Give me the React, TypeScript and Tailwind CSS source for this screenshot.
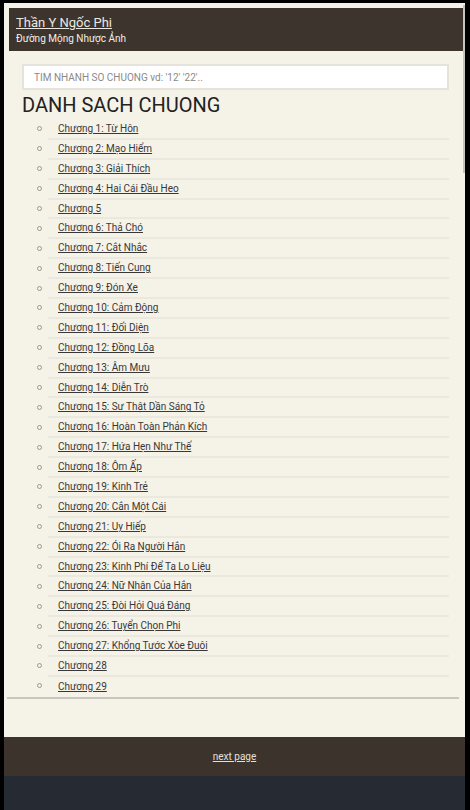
import React from 'react';

const chapters: string[] = [
  'Chương 1: Từ Hôn',
  'Chương 2: Mạo Hiểm',
  'Chương 3: Giải Thích',
  'Chương 4: Hai Cái Đầu Heo',
  'Chương 5',
  'Chương 6: Thả Chó',
  'Chương 7: Cắt Nhắc',
  'Chương 8: Tiến Cung',
  'Chương 9: Đón Xe',
  'Chương 10: Cảm Động',
  'Chương 11: Đối Diện',
  'Chương 12: Đồng Lõa',
  'Chương 13: Âm Mưu',
  'Chương 14: Diễn Trò',
  'Chương 15: Sự Thật Dần Sáng Tỏ',
  'Chương 16: Hoàn Toàn Phản Kích',
  'Chương 17: Hứa Hẹn Như Thế',
  'Chương 18: Ôm Ấp',
  'Chương 19: Kinh Trẻ',
  'Chương 20: Cắn Một Cái',
  'Chương 21: Uy Hiếp',
  'Chương 22: Ói Ra Người Hắn',
  'Chương 23: Kinh Phí Để Ta Lo Liệu',
  'Chương 24: Nữ Nhân Của Hắn',
  'Chương 25: Đòi Hỏi Quá Đáng',
  'Chương 26: Tuyển Chọn Phi',
  'Chương 27: Khổng Tước Xòe Đuôi',
  'Chương 28',
  'Chương 29',
];

const ChapterRow: React.FC<{ title: string; last: boolean }> = ({ title, last }) => (
  <li className="flex h-[19.9px] items-stretch">
    <span className="flex w-[18px] items-center justify-center pb-[2px]">
      <span className="h-[5px] w-[5px] rounded-full border border-[#9a978f]" />
    </span>
    <div
      className={`flex flex-1 items-center pl-[10px] ${last ? '' : 'border-b-2 border-[#ebe8df]'}`}
    >
      <a href="#" className="text-[10px] leading-none text-[#383838] underline">
        {title}
      </a>
    </div>
  </li>
);

const App: React.FC = () => {
  return (
    <div className="flex min-h-[810px] flex-col bg-black pl-1 pr-[5px] pt-[3px] font-['Roboto',sans-serif]">
      <div className="relative flex h-[734px] flex-col bg-[#f5f2e8] pl-[5px] pr-[2px] pt-[5px]">
        <div className="absolute right-0 top-[2px] h-[168px] w-[2px] bg-[#c7c4bb]" />
        <header className="flex h-[43px] flex-col justify-center bg-[#3c342d] pl-[7px] pr-2">
          <a href="#" className="text-[13px] leading-[16px] text-[#ece8e0] underline">
            Thần Y Ngốc Phi
          </a>
          <span className="mt-[1px] text-[10px] leading-[13px] text-[#f2efe8]">Đường Mộng Nhược Ảnh</span>
        </header>

        <div className="ml-[13px] mr-[14px] mt-[13px] flex h-[26px] items-center border-2 border-[#e6e3dc] bg-white pl-[10px]">
          <span className="text-[10px] text-[#8a8a8a]">TIM NHANH SO CHUONG vd: '12' '22'..</span>
        </div>

        <h1 className="ml-[13px] mt-[2px] text-[20px] leading-[26px] text-[#222]">DANH SACH CHUONG</h1>

        <ul className="ml-[21px] mr-[14px] mt-[2px]">
          {chapters.map((c, i) => (
            <ChapterRow key={c} title={c} last={i === chapters.length - 1} />
          ))}
        </ul>
        <div className="ml-[-2px] mr-[4px] h-[2px] bg-[#c9c6bd]" />
      </div>

      <footer className="flex h-[39px] items-center justify-center bg-[#3c332c]">
        <a href="#" className="text-[10px] text-[#e4e0d8] underline">
          next page
        </a>
      </footer>
      <div className="flex-1 bg-[#262a33]" />
    </div>
  );
};

export default App;
